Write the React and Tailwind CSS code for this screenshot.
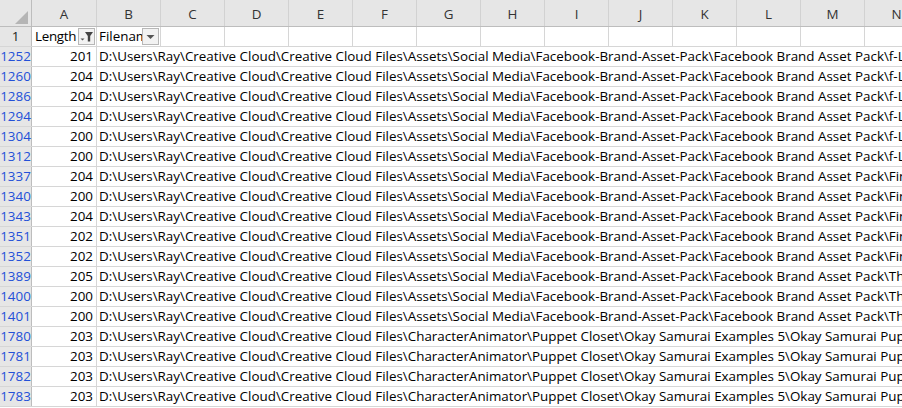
import React from "react";

const cols = ["C", "D", "E", "F", "G", "H", "I", "J", "K", "L", "M", "N"];

const FB = "D:\\Users\\Ray\\Creative Cloud\\Creative Cloud Files\\Assets\\Social Media\\Facebook-Brand-Asset-Pack\\Facebook Brand Asset Pack\\";
const CA = "D:\\Users\\Ray\\Creative Cloud\\Creative Cloud Files\\CharacterAnimator\\Puppet Closet\\Okay Samurai Examples 5\\Okay Samurai Puppet\\";

const rows = [
  ["1252", 201, FB + "f-Logo-2019\\f_Logo_Online_04_2019\\color"],
  ["1260", 204, FB + "f-Logo-2019\\f_Logo_Online_04_2019\\white"],
  ["1286", 204, FB + "f-Logo-2019\\f_Logo_Online_04_2019\\black"],
  ["1294", 204, FB + "f-Logo-2019\\f_Logo_Online_04_2019\\color"],
  ["1304", 200, FB + "f-Logo-2019\\f_Logo_Online_04_2019\\white"],
  ["1312", 200, FB + "f-Logo-2019\\f_Logo_Online_04_2019\\black"],
  ["1337", 204, FB + "Find Us On Facebook\\FindUsOnFacebook"],
  ["1340", 200, FB + "Find Us On Facebook\\FindUsOnFacebook"],
  ["1343", 204, FB + "Find Us On Facebook\\FindUsOnFacebook"],
  ["1351", 202, FB + "Find Us On Facebook\\FindUsOnFacebook"],
  ["1352", 202, FB + "Find Us On Facebook\\FindUsOnFacebook"],
  ["1389", 205, FB + "Thumbs Up\\Thumbs_Up_Online"],
  ["1400", 200, FB + "Thumbs Up\\Thumbs_Up_Online"],
  ["1401", 200, FB + "Thumbs Up\\Thumbs_Up_Online"],
  ["1780", 203, CA + "Okay Samurai Puppet.puppet"],
  ["1781", 203, CA + "Okay Samurai Puppet.puppet"],
  ["1782", 203, CA + "Okay Samurai Puppet.puppet"],
  ["1783", 203, CA + "Okay Samurai Puppet.puppet"],
];

function FilterActive() {
  return (
    <div className="w-[17px] h-[17px] shrink-0 bg-[#f2f2f2] border border-[#b7b7b7] flex items-center justify-center">
      <svg width="15" height="15" viewBox="0 0 15 15">
        <path d="M1.5 9.5 L5.5 9.5 L3.5 11.5 Z" fill="#555" />
        <path d="M6 3 L14 3 L11.2 7 L11.2 12.5 L8.8 12.5 L8.8 7 Z" fill="#444" />
      </svg>
    </div>
  );
}

function FilterArrow() {
  return (
    <div className="w-[17px] h-[17px] shrink-0 bg-[#f2f2f2] border border-[#b7b7b7] flex items-center justify-center">
      <svg width="15" height="15" viewBox="0 0 15 15">
        <path d="M3.5 6 L11.5 6 L7.5 10 Z" fill="#555" />
      </svg>
    </div>
  );
}

export default function App() {
  return (
    <div className="w-[902px] h-[408px] overflow-hidden bg-white text-black font-['Open_Sans',sans-serif] text-[13.4px]">
      {/* column headers */}
      <div className="flex h-[27px] bg-[#e6e6e6] border-b border-[#bdbdbd] text-[#333]">
        <div className="w-[32px] shrink-0 border-r border-[#bdbdbd] flex items-end justify-end pr-[2px] pb-[2px]">
          <svg width="14" height="13" viewBox="0 0 14 13">
            <path d="M13 0 L13 13 L0 13 Z" fill="#b5b5b5" />
          </svg>
        </div>
        <div className="w-[65px] shrink-0 border-r border-[#d2d2d2] flex items-center justify-center pt-[2px]">A</div>
        <div className="w-[64px] shrink-0 border-r border-[#d2d2d2] flex items-center justify-center pt-[2px]">B</div>
        {cols.map((c) => (
          <div key={c} className="w-[64px] shrink-0 border-r border-[#d2d2d2] flex items-center justify-center pt-[2px]">
            {c}
          </div>
        ))}
      </div>

      {/* row 1 */}
      <div className="flex h-[20px] border-b border-[#d6d6d6]">
        <div className="w-[32px] shrink-0 bg-[#e6e6e6] border-r border-[#bdbdbd] flex items-center justify-center text-[#222]">1</div>
        <div className="w-[65px] shrink-0 border-r border-[#d6d6d6] flex items-center pl-[3px] pr-[1px]">
          <span className="flex-1 overflow-hidden whitespace-nowrap tracking-[-0.3px]">Length</span>
          <FilterActive />
        </div>
        <div className="w-[64px] shrink-0 border-r border-[#d6d6d6] flex items-center pl-[2px] pr-[1px]">
          <span className="flex-1 overflow-hidden whitespace-nowrap">Filename</span>
          <FilterArrow />
        </div>
        {cols.map((c) => (
          <div key={c} className="w-[64px] shrink-0 border-r border-[#d6d6d6]" />
        ))}
      </div>

      {/* data rows */}
      {rows.map(([n, len, path]) => (
        <div key={n} className="flex h-[20px] border-b border-[#d6d6d6]">
          <div className="w-[32px] shrink-0 bg-[#e6e6e6] border-r border-[#bdbdbd] flex items-center justify-center text-[#2350d8]">
            {n}
          </div>
          <div className="w-[65px] shrink-0 border-r border-[#d6d6d6] flex items-center justify-end pr-[3px]">
            {len}
          </div>
          <div className="flex-1 min-w-0 overflow-hidden whitespace-nowrap flex items-center pl-[2px]">
            {path}
          </div>
        </div>
      ))}
    </div>
  );
}
